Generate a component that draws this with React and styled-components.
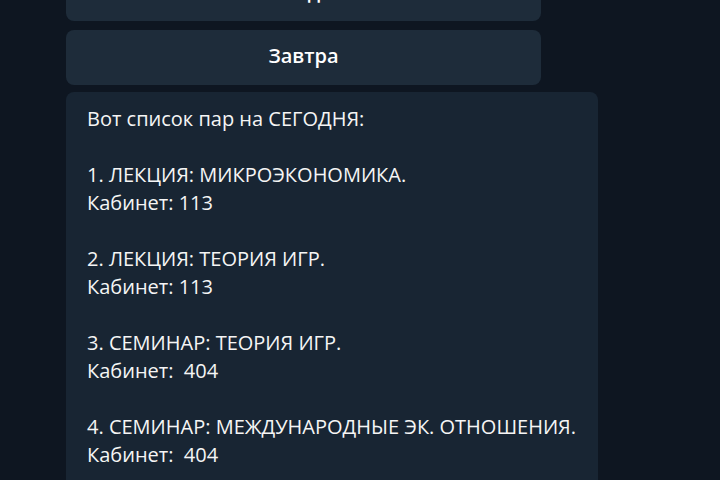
import React from "react";
import styled, { createGlobalStyle } from "styled-components";

const GlobalStyle = createGlobalStyle`
  html, body {
    margin: 0;
    padding: 0;
    background: #0e1621;
    overflow: hidden;
  }
  body {
    font-family: "Open Sans", "Noto Sans", sans-serif;
    color: #f5f5f5;
  }
`;

const Chat = styled.div`
  width: 720px;
  height: 480px;
  overflow: hidden;
  background: #0e1621;
`;

// scrolled feed, the top button sits partly above the window
const Feed = styled.div`
  display: flex;
  flex-direction: column;
  gap: 7px;
  padding-left: 66px;
  margin-top: -34px;
`;

const Keyboard = styled.div`
  display: flex;
  flex-direction: column;
  gap: 9px;
  width: 475px;
`;

const KeyButton = styled.button`
  height: 55px;
  padding: 0 0 4px;
  border: none;
  border-radius: 8px;
  background: #1e2c3a;
  color: #ffffff;
  font-family: "Open Sans", "Noto Sans", sans-serif;
  font-size: 20px;
  font-weight: 600;
  cursor: pointer;
`;

const Bubble = styled.div`
  width: 532px;
  box-sizing: border-box;
  padding: 13px 21px 20px;
  border-radius: 8px;
  background: #182533;
  font-size: 20px;
  line-height: 28px;
`;

const Line = styled.div`
  min-height: 28px;
  white-space: pre;
`;

const lessons = [
  { title: "1. ЛЕКЦИЯ: МИКРОЭКОНОМИКА.", room: "Кабинет: 113" },
  { title: "2. ЛЕКЦИЯ: ТЕОРИЯ ИГР.", room: "Кабинет: 113" },
  { title: "3. СЕМИНАР: ТЕОРИЯ ИГР.", room: "Кабинет:  404" },
  { title: "4. СЕМИНАР: МЕЖДУНАРОДНЫЕ ЭК. ОТНОШЕНИЯ.", room: "Кабинет:  404" },
];

const App = () => {
  return (
    <Chat>
      <GlobalStyle />
      <Feed>
        <Keyboard>
          <KeyButton>Сегодня</KeyButton>
          <KeyButton>Завтра</KeyButton>
        </Keyboard>
        <Bubble>
          <Line>Вот список пар на СЕГОДНЯ:</Line>
          {lessons.map((l) => (
            <React.Fragment key={l.title}>
              <Line />
              <Line>{l.title}</Line>
              <Line>{l.room}</Line>
            </React.Fragment>
          ))}
        </Bubble>
      </Feed>
    </Chat>
  );
};

export default App;
